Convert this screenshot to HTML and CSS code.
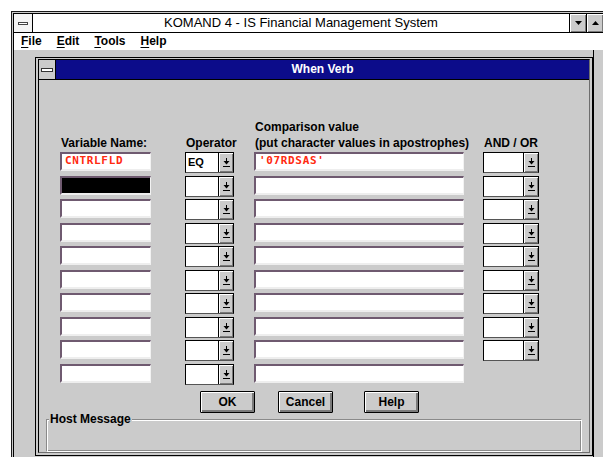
FILE: index.html
```html
<!DOCTYPE html>
<html>
<head>
<meta charset="utf-8">
<title>KOMAND 4 - IS Financial Management System</title>
<link rel="stylesheet" href="styles.css">
</head>
<body>
<svg class="defs" width="0" height="0" aria-hidden="true">
  <symbol id="drop" viewBox="0 0 7 9">
    <rect x="3" y="0" width="1" height="3" fill="#000"/>
    <polygon points="0.5,3 6.5,3 3.5,6.5" fill="#000"/>
    <rect x="0" y="8" width="7" height="1" fill="#000"/>
  </symbol>
</svg>

<div class="window">
  <div class="window-inner">
    <div class="titlebar">
      <div class="sysbox"><span class="sysdash"></span></div>
      <div class="title">KOMAND 4 - IS Financial Management System</div>
      <div class="tbtn"><svg width="7" height="4" viewBox="0 0 7 4"><polygon points="0,0 7,0 3.5,4" fill="#000"/></svg></div>
      <div class="tbtn"><svg width="7" height="4" viewBox="0 0 7 4"><polygon points="0,4 7,4 3.5,0" fill="#000"/></svg></div>
    </div>
    <div class="menubar">
      <span class="menu"><u>F</u>ile</span>
      <span class="menu"><u>E</u>dit</span>
      <span class="menu"><u>T</u>ools</span>
      <span class="menu"><u>H</u>elp</span>
    </div>
    <div class="client">
      <div class="dialog">
        <div class="dlg-inner">
          <div class="dlg-title">
            <div class="dlg-sys"><span class="dlg-dash"></span></div>
            <div class="dlg-caption">When Verb</div>
          </div>
          <div class="dlg-body">
            <div class="fields">
              <div class="col col-var">
                <div class="hdr">Variable Name:</div>
                <div class="list">
                  <div class="fld">CNTRLFLD</div>
                  <div class="fld sel"></div>
                  <div class="fld"></div>
                  <div class="fld"></div>
                  <div class="fld"></div>
                  <div class="fld"></div>
                  <div class="fld"></div>
                  <div class="fld"></div>
                  <div class="fld"></div>
                  <div class="fld"></div>
                </div>
              </div>
              <div class="col col-op">
                <div class="hdr">Operator</div>
                <div class="list combos">
                  <div class="combo"><span class="ctext">EQ</span><span class="cbtn"><svg width="7" height="9"><use href="#drop"/></svg></span></div>
                  <div class="combo"><span class="ctext"></span><span class="cbtn"><svg width="7" height="9"><use href="#drop"/></svg></span></div>
                  <div class="combo"><span class="ctext"></span><span class="cbtn"><svg width="7" height="9"><use href="#drop"/></svg></span></div>
                  <div class="combo"><span class="ctext"></span><span class="cbtn"><svg width="7" height="9"><use href="#drop"/></svg></span></div>
                  <div class="combo"><span class="ctext"></span><span class="cbtn"><svg width="7" height="9"><use href="#drop"/></svg></span></div>
                  <div class="combo"><span class="ctext"></span><span class="cbtn"><svg width="7" height="9"><use href="#drop"/></svg></span></div>
                  <div class="combo"><span class="ctext"></span><span class="cbtn"><svg width="7" height="9"><use href="#drop"/></svg></span></div>
                  <div class="combo"><span class="ctext"></span><span class="cbtn"><svg width="7" height="9"><use href="#drop"/></svg></span></div>
                  <div class="combo"><span class="ctext"></span><span class="cbtn"><svg width="7" height="9"><use href="#drop"/></svg></span></div>
                  <div class="combo"><span class="ctext"></span><span class="cbtn"><svg width="7" height="9"><use href="#drop"/></svg></span></div>
                </div>
              </div>
              <div class="col col-cmp">
                <div class="hdr">Comparison value<br>(put character values in apostrophes)</div>
                <div class="list">
                  <div class="fld">'07RDSAS'</div>
                  <div class="fld"></div>
                  <div class="fld"></div>
                  <div class="fld"></div>
                  <div class="fld"></div>
                  <div class="fld"></div>
                  <div class="fld"></div>
                  <div class="fld"></div>
                  <div class="fld"></div>
                  <div class="fld"></div>
                </div>
              </div>
              <div class="col col-ao">
                <div class="hdr">AND / OR</div>
                <div class="list combos">
                  <div class="combo"><span class="ctext"></span><span class="cbtn"><svg width="7" height="9"><use href="#drop"/></svg></span></div>
                  <div class="combo"><span class="ctext"></span><span class="cbtn"><svg width="7" height="9"><use href="#drop"/></svg></span></div>
                  <div class="combo"><span class="ctext"></span><span class="cbtn"><svg width="7" height="9"><use href="#drop"/></svg></span></div>
                  <div class="combo"><span class="ctext"></span><span class="cbtn"><svg width="7" height="9"><use href="#drop"/></svg></span></div>
                  <div class="combo"><span class="ctext"></span><span class="cbtn"><svg width="7" height="9"><use href="#drop"/></svg></span></div>
                  <div class="combo"><span class="ctext"></span><span class="cbtn"><svg width="7" height="9"><use href="#drop"/></svg></span></div>
                  <div class="combo"><span class="ctext"></span><span class="cbtn"><svg width="7" height="9"><use href="#drop"/></svg></span></div>
                  <div class="combo"><span class="ctext"></span><span class="cbtn"><svg width="7" height="9"><use href="#drop"/></svg></span></div>
                  <div class="combo"><span class="ctext"></span><span class="cbtn"><svg width="7" height="9"><use href="#drop"/></svg></span></div>
                </div>
              </div>
            </div>
            <div class="buttons">
              <button class="pbtn btn-ok">OK</button>
              <button class="pbtn btn-cancel">Cancel</button>
              <button class="pbtn btn-help">Help</button>
            </div>
            <fieldset class="host">
              <legend>Host Message</legend>
              <div class="host-msg"></div>
            </fieldset>
          </div>
        </div>
      </div>
    </div>
  </div>
</div>
</body>
</html>
```
FILE: styles.css
```css
* { box-sizing: border-box; }

html, body {
  margin: 0;
  height: 100%;
}

body {
  background: #fff;
  font-family: "Liberation Sans", Arial, sans-serif;
  color: #000;
  overflow: hidden;
  padding: 11px 0 0 11px;
}

.defs { position: absolute; }

/* main application window */
.window {
  height: 460px;
  background: #cbcbcb;
  border-left: 1px solid #1a1a1a;
  border-top: 1px solid #1a1a1a;
  padding: 1px 0 0 1px;
}

.window-inner {
  height: 100%;
  display: flex;
  flex-direction: column;
  border-left: 1px solid #000;
  border-top: 1px solid #000;
}

.titlebar {
  display: flex;
  height: 19px;
  background: #fff;
  border-bottom: 1px solid #000;
}

.sysbox {
  width: 19px;
  border-right: 1px solid #000;
  display: flex;
  align-items: center;
  justify-content: center;
  background: #f4f4f4;
}

.sysdash {
  display: block;
  width: 10px;
  height: 3px;
  border: 1px solid #444;
  background: #fff;
}

.title {
  flex: 1;
  text-align: center;
  font-size: 13px;
  line-height: 18px;
}

.tbtn {
  width: 17px;
  border-left: 1px solid #000;
  background: #cbcbcb;
  box-shadow: inset 1px 1px 0 #fff, inset -1px -1px 0 #7a7a7a;
  display: flex;
  align-items: center;
  justify-content: center;
}

.menubar {
  height: 17px;
  background: #fff;
  display: flex;
  font-size: 12px;
  font-weight: bold;
  line-height: 16px;
}

.menu { padding: 0 8px 0 7px; }
.menu u { text-decoration-thickness: 1px; text-underline-offset: 2px; }

/* client area */
.client {
  flex: 1;
  width: 580px;
  border-right: 1px solid #000;
  padding: 7px 0 0 21px;
}

/* dialog box */
.dialog {
  width: 558px;
  height: 399px;
  background: #cbcbcb;
  border: 1px solid #000;
  padding: 1px 2px 2px 2px;
}

.dlg-inner {
  height: 100%;
  display: flex;
  flex-direction: column;
  border: 1px solid #000;
  border-right-color: #6e6e6e;
  border-bottom-color: #6e6e6e;
  overflow: hidden;
}

.dlg-title {
  display: flex;
  height: 20px;
  background: #0c0c8a;
  border-bottom: 1px solid #000;
  flex: none;
}

.dlg-sys {
  width: 17px;
  background: #cbcbcb;
  border-right: 1px solid #000;
  display: flex;
  align-items: center;
  justify-content: center;
}

.dlg-dash {
  display: block;
  width: 12px;
  height: 4px;
  border: 1px solid #333;
  background: #fff;
}

.dlg-caption {
  flex: 1;
  color: #fff;
  text-align: center;
  font-size: 12px;
  font-weight: bold;
  line-height: 19px;
}

.dlg-body {
  flex: 1;
  padding: 38px 0 0 7px;
}

.fields {
  display: flex;
  align-items: flex-start;
  margin-left: 14px;
}

.col-var { width: 91px; }
.col-op { width: 49px; margin-left: 34px; }
.col-cmp { width: 210px; margin-left: 20px; }
.col-ao { width: 56px; margin-left: 19px; }

.hdr {
  height: 34px;
  display: flex;
  flex-direction: column;
  justify-content: flex-end;
  font-size: 12px;
  font-weight: bold;
  line-height: 16px;
  padding: 0 0 1px 1px;
  white-space: nowrap;
}

.list {
  display: flex;
  flex-direction: column;
  gap: 4.5px;
}

.list.combos { gap: 2.5px; }

/* sunken edit field */
.fld {
  height: 19px;
  background: #fff;
  border-top: 2px solid #6f5a70;
  border-left: 2px solid #6f5a70;
  border-right: 1px solid #f2f2f2;
  border-bottom: 2px solid #eeeeee;
  color: #ff2a10;
  font-family: "DejaVu Sans Mono", monospace;
  font-weight: bold;
  font-size: 11px;
  letter-spacing: 0.65px;
  line-height: 14px;
  padding-left: 3px;
  white-space: nowrap;
}

.fld.sel { background: #000; }

/* drop-down list */
.combo {
  height: 21px;
  display: flex;
  border: 1px solid #000;
  border-bottom-color: #555;
}

.ctext {
  flex: 1;
  background: #fff;
  font-size: 11px;
  font-weight: bold;
  line-height: 18px;
  padding-left: 2px;
}

.cbtn {
  width: 15px;
  border-left: 1px solid #000;
  background: #cbcbcb;
  box-shadow: inset 1px 1px 0 #fff, inset -1px -1px 0 #7a7a7a;
  display: flex;
  align-items: center;
  justify-content: center;
}

.cbtn svg { display: block; }

/* push buttons */
.buttons {
  display: flex;
  margin: 6.5px 0 0 154px;
}

.pbtn {
  width: 55px;
  height: 22px;
  padding: 0;
  font-family: "Liberation Sans", Arial, sans-serif;
  font-size: 12px;
  font-weight: bold;
  color: #000;
  background: #cbcbcb;
  border: 1px solid #000;
  border-radius: 1px;
  box-shadow: inset 1px 1px 0 #fff, inset -2px -2px 0 #7a7a7a;
}

.btn-cancel { margin-left: 23px; }
.btn-help { margin-left: 31px; }

/* host message group */
.host {
  width: 536px;
  margin: -1px 0 0 0;
  padding: 0 0 0 2px;
  border: 1px solid;
  border-color: #8a8a8a #fff #fff #8a8a8a;
  box-shadow: inset 1px 1px 0 #fff, inset -1px -1px 0 #8a8a8a;
}

.host legend {
  font-size: 12px;
  font-weight: bold;
  line-height: 14px;
  padding: 0 1px;
  background: #cbcbcb;
}

.host-msg { height: 25px; }
```
